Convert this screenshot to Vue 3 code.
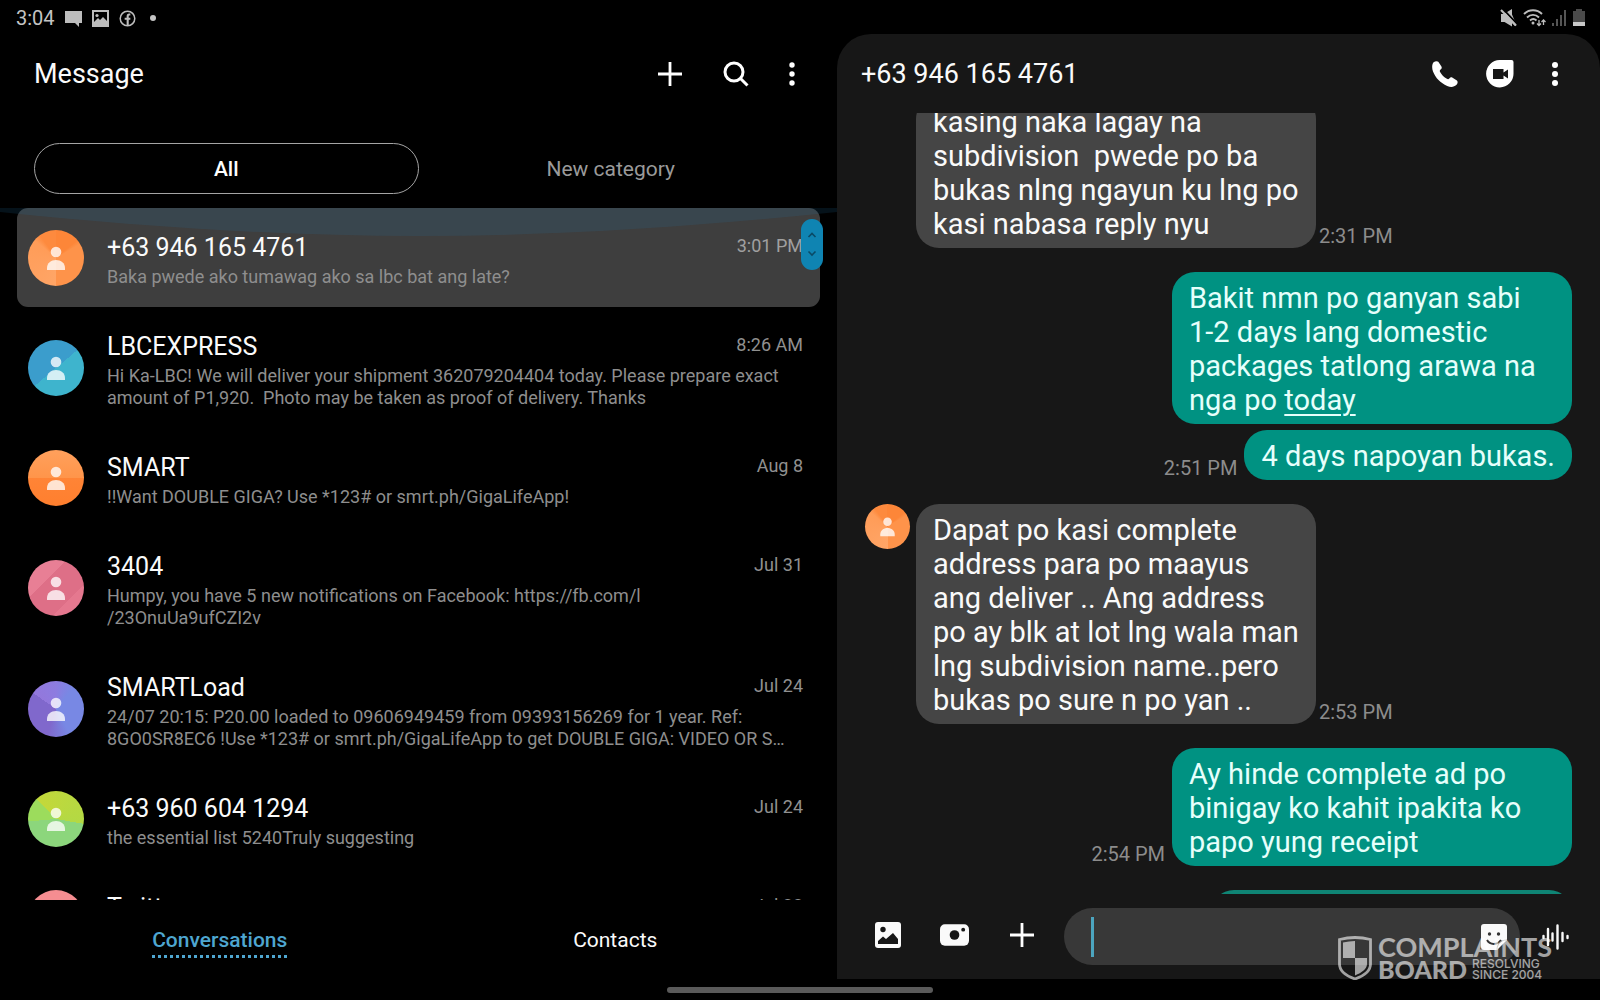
<script setup>
import { ref } from 'vue'

const conversations = [
  { name: '+63 946 165 4761', time: '3:01 PM', tone: 'amber', selected: true, text: 'Baka pwede ako tumawag ako sa lbc bat ang late?' },
  { name: 'LBCEXPRESS', time: '8:26 AM', tone: 'blue', text: 'Hi Ka-LBC! We will deliver your shipment 362079204404 today. Please prepare exact\namount of P1,920.  Photo may be taken as proof of delivery. Thanks' },
  { name: 'SMART', time: 'Aug 8', tone: 'orange', text: '!!Want DOUBLE GIGA? Use *123# or smrt.ph/GigaLifeApp!' },
  { name: '3404', time: 'Jul 31', tone: 'pink', text: 'Humpy, you have 5 new notifications on Facebook: https://fb.com/l\n/23OnuUa9ufCZI2v' },
  { name: 'SMARTLoad', time: 'Jul 24', tone: 'purple', text: '24/07 20:15: P20.00 loaded to 09606949459 from 09393156269 for 1 year. Ref:\n8GO0SR8EC6 !Use *123# or smrt.ph/GigaLifeApp to get DOUBLE GIGA: VIDEO OR S…' },
  { name: '+63 960 604 1294', time: 'Jul 24', tone: 'green', text: 'the essential list 5240Truly suggesting' },
  { name: 'Twitter', time: 'Jul 22', tone: 'coral', text: '' },
]

const messages = [
  { side: 'in', long: true, time: '2:31 PM', text: 'kasing naka lagay na\nsubdivision  pwede po ba\nbukas nlng ngayun ku lng po\nkasi nabasa reply nyu' },
  { side: 'out', long: true, text: 'Bakit nmn po ganyan sabi\n1-2 days lang domestic\npackages tatlong arawa na\nnga po ', link: 'today' },
  { side: 'out', follow: true, time: '2:51 PM', text: '4 days napoyan bukas.' },
  { side: 'in', long: true, avatar: true, time: '2:53 PM', text: 'Dapat po kasi complete\naddress para po maayus\nang deliver .. Ang address\npo ay blk at lot lng wala man\nlng subdivision name..pero\nbukas po sure n po yan ..' },
  { side: 'out', long: true, time: '2:54 PM', text: 'Ay hinde complete ad po\nbinigay ko kahit ipakita ko\npapo yung receipt' },
  { side: 'out', partial: true, text: '' },
]
const draft = ref('')
</script>

<template>
  <div class="screen">
    <div class="status">
      <div class="status-left">
        <span class="clock">3:04</span>
        <svg width="17" height="17" viewBox="0 0 17 17"><path d="M0 1h17v12h-3v4l-4-4H0z" fill="#bdbdbd" /></svg>
        <svg width="17" height="17" viewBox="0 0 17 17"><rect x="1" y="1" width="15" height="15" fill="none" stroke="#bdbdbd" stroke-width="2" /><circle cx="5" cy="5.500" r="1.600" fill="#bdbdbd" /><path d="M2 12l4-4 2 2 3-3 5 5v3H2z" fill="#bdbdbd" /></svg>
        <svg width="17" height="17" viewBox="0 0 18 18"><circle cx="9" cy="9" r="7.700" fill="none" stroke="#bdbdbd" stroke-width="1.600" /><path d="M12 4.800h-1.300c-1 0-1.500.6-1.500 1.700V17M6 9.300h6" fill="none" stroke="#bdbdbd" stroke-width="2.200" /></svg>
        <span class="dot"></span>
      </div>
      <div class="status-right">
        <svg width="17" height="18" viewBox="0 0 17 18"><path d="M1 5h3l8-5v5.500L16.500 16l-1.500 1-3-3v3.500L4.500 13H1z" fill="#bdbdbd" /><path d="M3 0l15 16" stroke="#000" stroke-width="1.800" /><path d="M1 1l15 15.500" stroke="#bdbdbd" stroke-width="2" /></svg>
        <svg width="23" height="18" viewBox="0 0 23 18" fill="none" stroke="#bdbdbd"><path d="M1 5c5-5 13-5 18 0M4 8.500c3.500-3.500 8.500-3.500 12 0M7 11.500c2-1.800 4.500-1.800 6.500 0" stroke-width="1.900" /><circle cx="10" cy="14" r="1.500" fill="#bdbdbd" stroke="none" /><path d="M16 11v5.500M14 14.500l2 2 2-2M20.500 16v-5M18.500 13l2-2 2 2" stroke-width="1.300" /></svg>
        <svg width="15" height="18" viewBox="0 0 15 18" fill="#555"><rect x="0" y="14" width="2" height="3" /><rect x="4" y="10" width="2" height="7" /><rect x="8" y="6" width="2" height="11" /><rect x="12" y="1" width="2" height="16" /></svg>
        <svg width="12" height="18" viewBox="0 0 12 18"><path d="M3 0h6v2h3v11H0V2h3z" fill="#4a4a4a" /><rect y="13" width="12" height="4" fill="#c8c8c8" /></svg>
      </div>
    </div>

    <div class="panes">
      <section class="inbox">
        <header class="bar inbox-bar">
          <h1>Message</h1>
          <div class="actions">
            <button class="icon" aria-label="Compose"><svg width="26" height="26" viewBox="0 0 26 26"><path d="M13 1v24M1 13h24" stroke="#fff" stroke-width="2.800" /></svg></button>
            <button class="icon" aria-label="Search"><svg width="26" height="26" viewBox="0 0 26 26"><circle cx="11" cy="11" r="9" fill="none" stroke="#fff" stroke-width="3" /><path d="M17.500 17.500l7 7" stroke="#fff" stroke-width="3" /></svg></button>
            <button class="icon" aria-label="More options"><svg width="6" height="26" viewBox="10 0 6 26" fill="#fff"><circle cx="13" cy="4" r="2.700" /><circle cx="13" cy="13" r="2.700" /><circle cx="13" cy="22" r="2.700" /></svg></button>
          </div>
        </header>

        <div class="categories">
          <button class="category current">All</button>
          <button class="category">New category</button>
        </div>

        <div class="list-area">
          <ul class="list">
            <li v-for="c in conversations" :key="c.name" class="row" :class="{ selected: c.selected }">
              <span class="avatar" :class="c.tone">
                <svg viewBox="0 0 56 56" fill="#fff" fill-opacity=".78"><circle cx="28" cy="22" r="5.300" /><path d="M19 40v-2c0-5 4-8 9-8s9 3 9 8v2z" /></svg>
              </span>
              <div class="summary">
                <div class="top-line">
                  <h2>{{ c.name }}</h2>
                  <time>{{ c.time }}</time>
                </div>
                <p>{{ c.text }}</p>
              </div>
            </li>
          </ul>
          <svg class="glow" viewBox="0 0 836 28" preserveAspectRatio="none"><path d="M0 0H836V4C700 18 560 28 418 28S136 18 0 4z" fill="#237aaf" fill-opacity=".15" /></svg>
          <div class="thumb">
            <svg width="22" height="51" viewBox="0 0 22 51" fill="none" stroke="#0a4a66" stroke-width="1.600"><path d="M7.500 18l3.500-3.500 3.500 3.500M7.500 32.500l3.500 3.500 3.500-3.500" /></svg>
          </div>
        </div>

        <nav class="tabs">
          <a href="#conversations" class="tab active"><span>Conversations</span></a>
          <a href="#contacts" class="tab"><span>Contacts</span></a>
        </nav>
      </section>

      <section class="chat">
        <header class="bar chat-bar">
          <h1>+63 946 165 4761</h1>
          <div class="actions">
            <button class="icon" aria-label="Call"><svg width="26" height="26" viewBox="0 0 26 26"><path d="M1.300 1.500C3 .2 5.200-.2 6.300.8l3 4.500c.8 1.300.5 2.400-.7 3.300-1 .8-1 1.500-.5 2.400 1.600 2.900 3.900 5.200 6.800 6.800 1 .6 1.700.5 2.400-.4 1-1.200 2-1.500 3.300-.7l4.300 2.900c1.200 1 .8 3-.7 4.500-2 2-5.500 2.500-9 .8C8.500 22 3.500 17 1 10.500-.3 7 0 3.500 1.300 1.500z" fill="#fff" /></svg></button>
            <button class="icon" aria-label="Video call"><svg width="28" height="28" viewBox="0 0 28 28"><path d="M14 0h11.500A2 2 0 0 1 27.500 2v11.500A13.700 13.700 0 1 1 14 0z" fill="#fff" /><path d="M7 9h10.500v3.500L22 9.500v9L17.500 15.500V19H7z" fill="#171717" /></svg></button>
            <button class="icon" aria-label="More options"><svg width="26" height="26" viewBox="0 0 26 26" fill="#fff"><circle cx="13" cy="4" r="3" /><circle cx="13" cy="13" r="3" /><circle cx="13" cy="22" r="3" /></svg></button>
          </div>
        </header>

        <div class="thread">
          <div class="messages">
            <div v-for="(m, i) in messages" :key="i" class="message" :class="[m.side, { follow: m.follow }]">
              <span v-if="m.side === 'in'" class="gutter">
                <span v-if="m.avatar" class="avatar small amber">
                  <svg viewBox="0 0 56 56" fill="#fff" fill-opacity=".78"><circle cx="28" cy="22" r="5.300" /><path d="M19 40v-2c0-5 4-8 9-8s9 3 9 8v2z" /></svg>
                </span>
              </span>
              <time v-if="m.side === 'out' && m.time">{{ m.time }}</time>
              <p class="bubble" :class="{ long: m.long, partial: m.partial }">{{ m.text }}<a v-if="m.link" href="#today">{{ m.link }}</a></p>
              <time v-if="m.side === 'in'">{{ m.time }}</time>
            </div>
          </div>
        </div>

        <form class="composer" @submit.prevent>
          <div class="tools">
            <button type="button" class="icon" aria-label="Gallery"><svg width="26" height="26" viewBox="0 0 26 26"><rect width="26" height="26" rx="3" fill="#fafafa" /><circle cx="8" cy="7.500" r="2.700" fill="#171717" /><path d="M3 22v-3l5-4.500 3 2.500 7-6 5 6v5z" fill="#171717" /></svg></button>
            <button type="button" class="icon" aria-label="Camera"><svg width="30" height="22" viewBox="0 0 30 22"><rect width="30" height="22" rx="5" fill="#fafafa" /><circle cx="15" cy="11" r="5" fill="#171717" /><circle cx="24" cy="5.500" r="2" fill="#171717" /></svg></button>
            <button type="button" class="icon" aria-label="Attach"><svg width="26" height="26" viewBox="0 0 26 26"><path d="M13 1v24M1 13h24" stroke="#fff" stroke-width="2.800" /></svg></button>
          </div>
          <div class="field">
            <span class="caret"></span>
            <input v-model="draft" type="text" aria-label="Message text" />
            <button type="button" class="icon" aria-label="Stickers"><svg width="26" height="26" viewBox="0 0 26 26"><path d="M3 0h20a3 3 0 0 1 3 3v13L16 26H3a3 3 0 0 1-3-3V3a3 3 0 0 1 3-3z" fill="#fafafa" /><circle cx="8.500" cy="10" r="1.700" fill="#333" /><circle cx="17.500" cy="10" r="1.700" fill="#333" /><path d="M6 16c3 5 10 5.500 14 0" fill="none" stroke="#333" stroke-width="2" /><path d="M16 26c0-6 3-10 10-10" fill="none" stroke="#999" /></svg></button>
          </div>
          <button type="button" class="icon voice" aria-label="Voice message"><svg width="28" height="26" viewBox="0 0 28 26" stroke="#fafafa" stroke-width="2.400" stroke-linecap="round"><path d="M1.500 12v2M6 5v16M10.500 9.500v7M15.500 1.500v23M20.500 9v8M25.500 12v2" /></svg></button>
        </form>
      </section>
    </div>

    <div class="gesture"><span></span></div>

    <div class="watermark">
      <svg width="34" height="44" viewBox="0 0 34 44"><path d="M1.500 3.500Q17-.5 32.500 3.500V28c0 7-7 12-15.500 15C8.500 40 1.500 35 1.500 28z" fill="none" stroke="#fff" stroke-width="2.800" /><path d="M17 5v17H5V6.500Q11 5 17 5zM17 22h12v6c0 5-5 8.500-12 11.500z" fill="#fff" /></svg>
      <div class="brand">
        <div class="brand-top">COMPLAINTS</div>
        <div class="brand-bottom">
          <strong>BOARD</strong>
          <small>RESOLVING<br />SINCE 2004</small>
        </div>
      </div>
    </div>
  </div>
</template>

<style>
body {
  margin: 0;
  background: #000;
}
</style>

<style scoped>
.screen {
  position: relative;
  display: flex;
  flex-direction: column;
  height: 100vh;
  background: #000;
  color: #fafafa;
  font-family: Roboto, "Liberation Sans", sans-serif;
  overflow: hidden;
}
h1, h2, p, ul { margin: 0; padding: 0; font-weight: 400; }
svg { display: block; }
button {
  border: 0;
  padding: 0;
  background: none;
  color: inherit;
  font-family: inherit;
}
.icon {
  display: flex;
  align-items: center;
  justify-content: center;
}
.status {
  box-sizing: border-box;
  display: flex;
  justify-content: space-between;
  align-items: center;
  height: 34px;
  padding: 2px 15px 0 16px;
}
.status-left, .status-right { display: flex; align-items: center; }
.status-left { gap: 10px; }
.status-right { gap: 6px; }
.clock { font-size: 20px; line-height: 24px; color: #c4c4c4; }
.dot { width: 6px; height: 6px; margin-left: 4px; border-radius: 50%; background: #c4c4c4; }
.panes { flex: 1; display: flex; min-height: 0; }
.inbox {
  flex: 837;
  min-width: 0;
  display: flex;
  flex-direction: column;
}
.bar {
  flex: none;
  display: flex;
  justify-content: space-between;
  align-items: center;
  height: 79px;
}
.bar h1 { font-size: 27px; line-height: 32px; }
.inbox-bar { padding: 0 42px 0 34px; }
.chat-bar { padding: 0 32px 0 24px; }
.actions { display: flex; align-items: center; }
.inbox-bar .actions { gap: 40px; }
.chat-bar .actions { gap: 28px; }
.categories { display: flex; margin: 30px 34px 14px; }
.category {
  flex: 1;
  height: 51px;
  border: 1px solid transparent;
  border-radius: 26px;
  font-size: 21px;
  color: #9a9a9a;
}
.category.current {
  border-color: #a5a5a5;
  color: #fff;
  font-weight: 500;
}
.list-area { position: relative; flex: 1; min-height: 0; }
.list { height: 100%; overflow: hidden; list-style: none; }
.row {
  display: flex;
  align-items: center;
  gap: 23px;
  margin: 0 17px;
  padding: 0 17px 0 11px;
  border-radius: 11px;
}
.row.selected { background: #3e3e3e; }
.avatar {
  flex: none;
  display: block;
  width: 56px;
  height: 56px;
  border-radius: 50%;
}
.avatar.small { width: 45px; height: 45px; }
.amber { background: conic-gradient(#fd8638 0deg 50deg, #fe934a 60deg 180deg, #ffa566 180deg, #ff9c58 310deg, #fd8a3e 325deg); }
.blue { background: linear-gradient(140deg, #3b9dcc 50%, #3eb4cd 50%); }
.orange { background: linear-gradient(#ffa05c, #ff954a 50%, #ff8436 50%, #ff7f2e); }
.pink { background: linear-gradient(135deg, #e87f95 34%, #de6f87 34% 72%, #e5788f 72%); }
.purple { background: conic-gradient(#8d7ce0 0deg, #7888e4 40deg 150deg, #8068cc 200deg 305deg, #9378dc 305deg, #8d7ce0); }
.green { background: conic-gradient(from 100deg, #8cd67c 0deg 165deg, #9cdc5c 165deg 215deg, #c3d83a 215deg, #b3d944); }
.coral { background: #f58d91; }
.summary { flex: 1; min-width: 0; padding: 25px 0 19px; }
.top-line { display: flex; align-items: flex-start; justify-content: space-between; margin-bottom: 3px; }
.top-line h2 { font-size: 25px; line-height: 30px; }
.top-line time { font-size: 18px; line-height: 26px; color: #909090; }
.row.selected time { color: #a0a0a0; }
.summary p {
  min-height: 22px;
  font-size: 18px;
  line-height: 22px;
  color: #8e8e8e;
  white-space: pre;
}
.glow { position: absolute; top: 0; left: 0; width: 100%; height: 28px; }
.thumb {
  position: absolute;
  top: 11px;
  right: 14px;
  border-radius: 11px;
  background: #0f84b2;
}
.tabs { flex: none; display: flex; height: 79px; padding: 0 24px 0 22px; }
.tab {
  flex: 1;
  display: flex;
  align-items: center;
  justify-content: center;
  color: #fafafa;
  font-size: 21px;
  line-height: 26px;
  text-decoration: none;
}
.tab span { padding: 5px 0 2px; border-bottom: 3px dotted transparent; }
.tab.active { color: #4ea6d0; font-weight: 500; }
.tab.active span { border-color: #4ea6d0; }
.chat {
  flex: 763;
  min-width: 0;
  display: flex;
  flex-direction: column;
  border-radius: 34px 34px 0 0;
  background: #171717;
}
.thread { flex: 1; min-height: 0; overflow: hidden; }
.messages {
  display: flex;
  flex-direction: column;
  gap: 24px;
  margin-top: -17px;
  padding: 0 28px;
}
.message { display: flex; align-items: flex-end; }
.message.out { justify-content: flex-end; gap: 7px; }
.message.in { gap: 3px; }
.message.follow { margin-top: -18px; }
.gutter { align-self: stretch; width: 48px; }
.message time { padding-bottom: 1px; font-size: 20px; line-height: 22px; color: #8c8c8c; white-space: nowrap; }
.bubble {
  box-sizing: border-box;
  padding: 9px 17px 7px;
  border-radius: 23px;
  font-size: 29px;
  line-height: 34px;
  white-space: pre-wrap;
}
.bubble.long { width: 400px; }
.in .bubble { background: #454545; }
.out .bubble { background: #009282; color: #e6fffb; }
.out .bubble.partial { width: 361px; height: 50px; background: #0f8575; }
.bubble a { color: inherit; text-decoration: underline; text-underline-offset: 4px; text-decoration-thickness: 2px; }
.composer {
  flex: none;
  display: flex;
  align-items: center;
  height: 85px;
  padding: 0 30px 0 36px;
}
.tools { display: flex; gap: 38px; padding-bottom: 4px; }
.tools .icon { width: 29px; }
.field {
  flex: 1;
  display: flex;
  align-items: center;
  height: 57px;
  margin: 0 22px 0 28px;
  padding: 0 13px 0 27px;
  border-radius: 29px;
  background: #383838;
}
.caret { width: 3px; height: 40px; background: #4ca5bf; }
.field input {
  flex: 1;
  min-width: 0;
  border: 0;
  outline: 0;
  background: none;
  color: #fafafa;
  font: 26px Roboto, sans-serif;
}
.gesture { flex: none; display: flex; justify-content: center; height: 21px; }
.gesture span { width: 266px; height: 6px; margin-top: 8px; border-radius: 3px; background: #5a5a5a; }
.watermark {
  position: absolute;
  right: 48px;
  bottom: 20px;
  display: flex;
  gap: 6px;
  opacity: .6;
  color: #fff;
  font-family: Lato, sans-serif;
  font-weight: 700;
  pointer-events: none;
}
.brand-top { font-size: 27px; line-height: 22px; }
.brand-bottom { display: flex; align-items: center; gap: 5px; }
.brand-bottom strong { font-size: 25px; line-height: 22px; }
.brand-bottom small { font: 500 12px/11px Inter, sans-serif; }
</style>
